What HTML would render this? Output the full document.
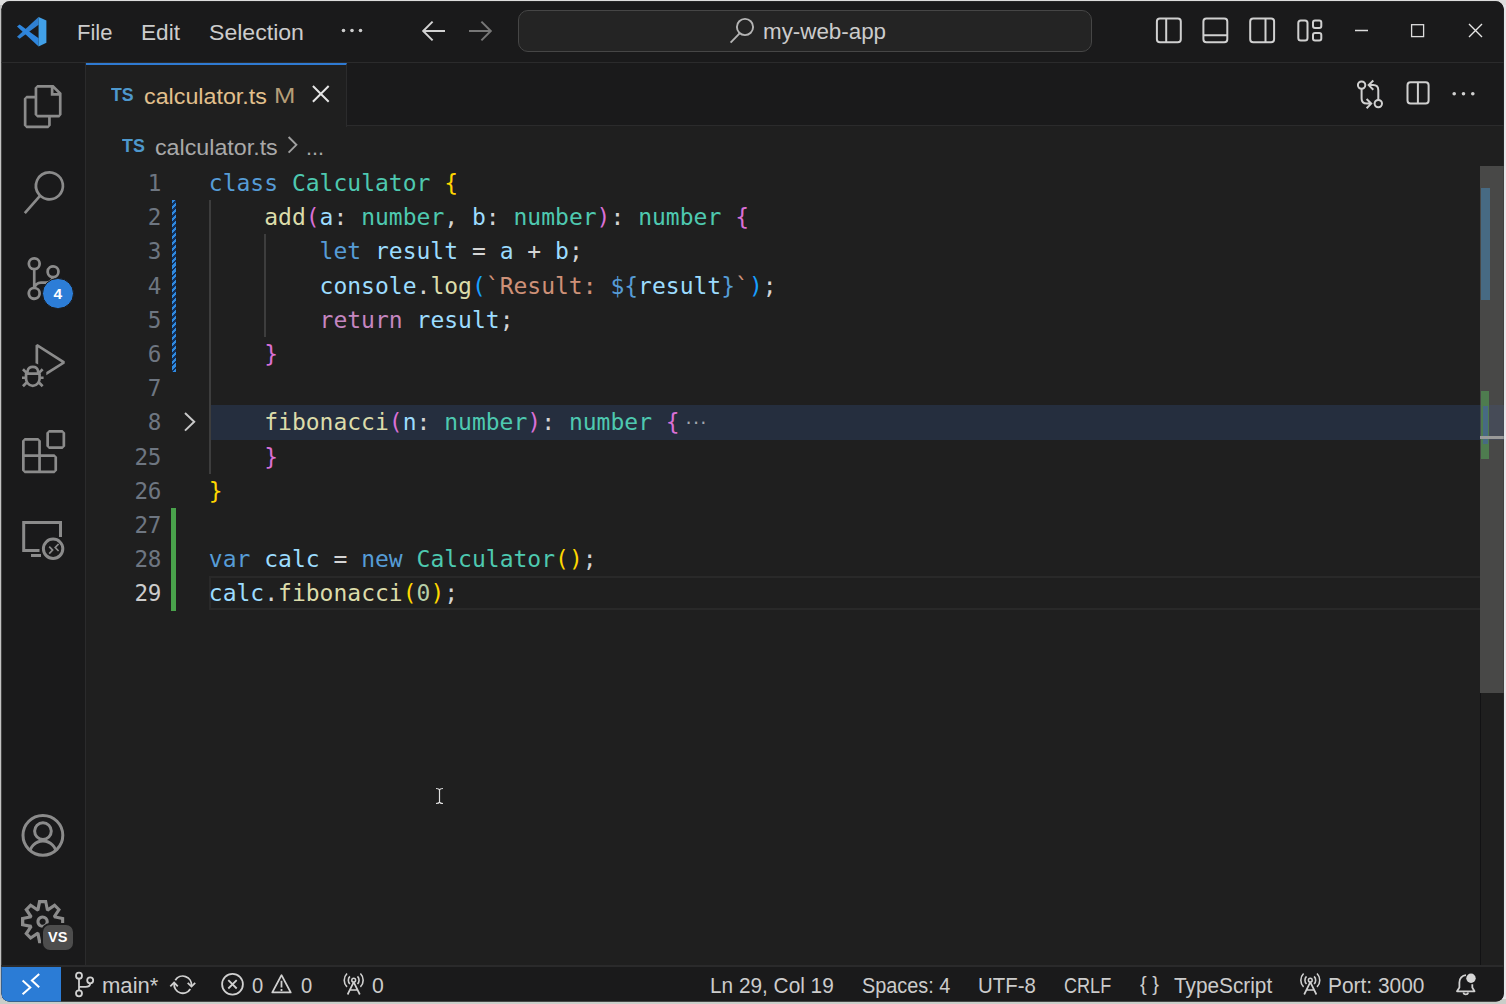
<!DOCTYPE html>
<html lang="en">
<head>
<meta charset="utf-8">
<title>calculator.ts - my-web-app - Visual Studio Code</title>
<style>
*{box-sizing:border-box;margin:0;padding:0}
html,body{width:1506px;height:1004px;overflow:hidden;background:#c4c4c4}
body{position:relative;background:linear-gradient(#dddddd,#dddddd) top/100% 5px no-repeat,linear-gradient(#c9cec9,#c9cec9) bottom/100% 5px no-repeat,linear-gradient(#e6e6ea,#e6e6ea) right/5px 100% no-repeat,#c2c2c2;font-family:"Liberation Sans",sans-serif;color:#cccccc}
#win{position:absolute;left:0;top:0;width:1506px;height:1004px;background:#1a1a1b;clip-path:inset(1.3px 2.2px 2.4px 1.5px round 8px)}
.abs{position:absolute}
.ui{position:absolute;white-space:pre;line-height:1;transform-origin:0 50%}
svg{position:absolute;overflow:visible}
/* regions */
#titlebar{left:0;top:0;width:1506px;height:63px;background:#1a1a1b;border-bottom:1px solid #2b2b2c}
#activity{left:0;top:63px;width:86px;height:903px;background:#1a1a1b;border-right:1px solid #2b2b2c}
#tabs{left:86px;top:63px;width:1420px;height:62.5px;background:#1a1a1b;border-bottom:1.5px solid #2b2b2c}
#tab{left:86px;top:63px;width:261px;height:64px;background:#1f1f1f;border-right:1px solid #2b2b2c;border-top:2px solid #2f7ad2}
#editor{left:86px;top:125.5px;width:1420px;height:841px;background:#1f1f1f}
#status{left:0;top:965px;width:1506px;height:39px;background:#1a1a1b;border-top:2px solid #2a2a2b}
#remote{left:0;top:967px;width:61.4px;height:37px;background:#2b7cd6}
/* code */
.ln{position:absolute;left:100px;width:61px;text-align:right;height:34px;line-height:34px;font-family:"DejaVu Sans Mono","Liberation Mono",monospace;font-size:22.6px;color:#6e7681;letter-spacing:-0.3px}
.cl{position:absolute;left:208.8px;height:34px;line-height:34px;white-space:pre;font-family:"DejaVu Sans Mono","Liberation Mono",monospace;font-size:23px;color:#d4d4d4}
.k{color:#569cd6}.t{color:#4ec9b0}.f{color:#dcdcaa}.v{color:#9cdcfe}.s{color:#ce9178}.c{color:#c586c0}.n{color:#b5cea8}
.b1{color:#ffd700}.b2{color:#da70d6}.b3{color:#179fff}
</style>
</head>
<body>
<div id="win">
<div id="titlebar" class="abs"></div>
<div id="activity" class="abs"></div>
<div id="tabs" class="abs"></div>
<div id="editor" class="abs"></div>
<div id="tab" class="abs"></div>
<div id="status" class="abs"></div>
<div id="remote" class="abs"></div>

<!-- TITLEBAR -->
<div id="tb-items">
<span class="ui" id="m-file" style="left:76.9px;top:22.14px;font-size:22.4px;transform:scaleX(0.9844)">File</span>
<span class="ui" id="m-edit" style="left:141.4px;top:22.14px;font-size:22.4px;transform:scaleX(1.0087)">Edit</span>
<span class="ui" id="m-sel" style="left:209.2px;top:22.14px;font-size:22.4px;transform:scaleX(1.0308)">Selection</span>
<div class="abs" id="cmd" style="left:518px;top:10px;width:574px;height:42px;border:1px solid #464646;border-radius:10px;background:#242424"></div>
<span class="ui" id="cmd-t" style="left:762.6px;top:20.84px;font-size:22.4px;transform:scaleX(0.9989)">my-web-app</span>
</div>

<!-- TAB -->
<span class="ui" id="tab-ts" style="left:110.8px;top:85.76px;font-size:18px;font-weight:bold;color:#4e98cd;transform:scaleX(0.9842)">TS</span>
<span class="ui" id="tab-name" style="left:144.2px;top:85.74px;font-size:22.4px;color:#e2c08d;transform:scaleX(1.0394)">calculator.ts</span>
<span class="ui" id="tab-m" style="left:274.4px;top:85.4px;font-size:22px;color:#b59e78;transform:scaleX(1.1665)">M</span>

<!-- BREADCRUMB -->
<span class="ui" id="bc-ts" style="left:122.2px;top:136.66px;font-size:18px;font-weight:bold;color:#4e98cd;transform:scaleX(0.9926)">TS</span>
<span class="ui" id="bc-name" style="left:155.1px;top:136.84px;font-size:22.4px;color:#a9a9a9;transform:scaleX(1.0382)">calculator.ts</span>
<span class="ui" id="bc-dots" style="left:306.4px;top:136.84px;font-size:22.4px;color:#a9a9a9;transform:scaleX(0.9643)">...</span>

<!-- EDITOR DECORATIONS -->
<div id="deco">
<div class="abs" id="hl8" style="left:209px;top:404.6px;width:1271px;height:35.3px;background:#252e3e"></div>
<div class="abs" id="cur" style="left:209px;top:576px;width:1274px;height:34.4px;border:2px solid #292929"></div>
<div class="abs" id="ig1" style="left:209px;top:200px;width:2px;height:274px;background:#3d3d3d"></div>
<div class="abs" id="ig2" style="left:264px;top:234px;width:2px;height:103px;background:#3d3d3d"></div>
<div class="abs" id="dd-mod" style="left:171.5px;top:200px;width:4.6px;height:171.6px;background:repeating-linear-gradient(-45deg,#2f8ae0 0 2.2px,#11305c 2.2px 4.2px)"></div>
<div class="abs" id="dd-add" style="left:171.3px;top:507.8px;width:4.8px;height:103.3px;background:#49a24b"></div>
</div>

<!-- LINE NUMBERS -->
<div id="lns">
<div class="ln" style="top:166px">1</div>
<div class="ln" style="top:200px">2</div>
<div class="ln" style="top:234px">3</div>
<div class="ln" style="top:269px">4</div>
<div class="ln" style="top:303px">5</div>
<div class="ln" style="top:337px">6</div>
<div class="ln" style="top:371px">7</div>
<div class="ln" style="top:405px">8</div>
<div class="ln" style="top:440px">25</div>
<div class="ln" style="top:474px">26</div>
<div class="ln" style="top:508px">27</div>
<div class="ln" style="top:542px">28</div>
<div class="ln" style="top:576px;color:#cccccc">29</div>
</div>

<!-- CODE -->
<div id="code">
<div class="cl" style="top:166px"><span class="k">class</span> <span class="t">Calculator</span> <span class="b1">{</span></div>
<div class="cl" style="top:200px">    <span class="f">add</span><span class="b2">(</span><span class="v">a</span>: <span class="t">number</span>, <span class="v">b</span>: <span class="t">number</span><span class="b2">)</span>: <span class="t">number</span> <span class="b2">{</span></div>
<div class="cl" style="top:234px">        <span class="k">let</span> <span class="v">result</span> = <span class="v">a</span> + <span class="v">b</span>;</div>
<div class="cl" style="top:269px">        <span class="v">console</span>.<span class="f">log</span><span class="b3">(</span><span class="s">`Result: </span><span class="k">${</span><span class="v">result</span><span class="k">}</span><span class="s">`</span><span class="b3">)</span>;</div>
<div class="cl" style="top:303px">        <span class="c">return</span> <span class="v">result</span>;</div>
<div class="cl" style="top:337px">    <span class="b2">}</span></div>
<div class="cl" style="top:405px">    <span class="f">fibonacci</span><span class="b2">(</span><span class="v">n</span>: <span class="t">number</span><span class="b2">)</span>: <span class="t">number</span> <span class="b2">{</span><span style="color:#a2a6ad;font-size:16px;letter-spacing:-2.2px;position:relative;left:4px;top:-2px">···</span></div>
<div class="cl" style="top:440px">    <span class="b2">}</span></div>
<div class="cl" style="top:474px"><span class="b1">}</span></div>
<div class="cl" style="top:542px"><span class="k">var</span> <span class="v">calc</span> = <span class="k">new</span> <span class="t">Calculator</span><span class="b1">()</span>;</div>
<div class="cl" style="top:576px"><span class="v">calc</span>.<span class="f">fibonacci</span><span class="b1">(</span><span class="n">0</span><span class="b1">)</span>;</div>
</div>

<!-- SCROLLBAR -->
<div id="sb">
<div class="abs" style="left:1480px;top:693px;width:1px;height:272px;background:#121214"></div>
<div class="abs" style="left:1480px;top:166px;width:26px;height:527px;background:#484847"></div>
<div class="abs" style="left:1480px;top:405px;width:26px;height:35px;background:#464b57"></div>
<div class="abs" style="left:1481px;top:188px;width:9px;height:112px;background:#476a83"></div>
<div class="abs" style="left:1481px;top:391px;width:8px;height:68px;background:#4e7c4f"></div>
<div class="abs" style="left:1483px;top:406px;width:5px;height:38px;background:#476a83"></div>
<div class="abs" style="left:1480px;top:436px;width:26px;height:3px;background:#9a9a9a"></div>
</div>

<!-- STATUS BAR -->
<div id="st-items">
<span class="ui" id="s-main" style="left:102.3px;top:975.04px;font-size:22.4px;transform:scaleX(0.9850)">main*</span>
<span class="ui" id="s-e0" style="left:251.7px;top:975.04px;font-size:22.4px;transform:scaleX(0.9014)">0</span>
<span class="ui" id="s-w0" style="left:300.7px;top:975.04px;font-size:22.4px;transform:scaleX(0.9014)">0</span>
<span class="ui" id="s-p0" style="left:372.0px;top:975.04px;font-size:22.4px;transform:scaleX(0.9472)">0</span>
<span class="ui" id="s-ln" style="left:710.0px;top:975.04px;font-size:22.4px;transform:scaleX(0.9290)">Ln 29, Col 19</span>
<span class="ui" id="s-sp" style="left:861.5px;top:975.04px;font-size:22.4px;transform:scaleX(0.8875)">Spaces: 4</span>
<span class="ui" id="s-utf" style="left:978.2px;top:975.04px;font-size:22.4px;transform:scaleX(0.9115)">UTF-8</span>
<span class="ui" id="s-crlf" style="left:1063.9px;top:975.04px;font-size:22.4px;transform:scaleX(0.8076)">CRLF</span>
<span class="ui" id="s-br" style="left:1140.3px;top:973.5px;font-size:20.5px;transform:scaleX(0.9743)">{ }</span>
<span class="ui" id="s-ts" style="left:1173.9px;top:975.04px;font-size:22.4px;transform:scaleX(0.9284)">TypeScript</span>
<span class="ui" id="s-port" style="left:1327.8px;top:975.04px;font-size:22.4px;transform:scaleX(0.9328)">Port: 3000</span>
</div>

<!-- ICONS -->
<div id="icons">
<!-- VS Code logo -->
<svg id="logo" style="left:16.7px;top:16.7px" width="29.4" height="29.4" viewBox="0 0 29.4 29.4">
<polygon points="21.6,0 21.6,7.8 2.6,21.8 0,19.8" fill="#2f80d2"/>
<polygon points="0,9.6 2.6,7.5 21.6,21.3 21.6,29.4" fill="#2e86de"/>
<polygon points="21.6,0 29.4,3.4 29.4,25.8 21.6,29.4" fill="#41a0e8"/>
</svg>
<!-- nav arrows -->
<svg style="left:0;top:0" width="1506" height="62" viewBox="0 0 1506 62" fill="none" stroke-linecap="butt" stroke-linejoin="miter">
<path d="M445 31H423.5M432.6 21.6L423.2 31L432.6 40.4" stroke="#d2d2d2" stroke-width="2"/>
<path d="M469 31H490.5M481.4 21.6L490.8 31L481.4 40.4" stroke="#777777" stroke-width="2"/>
<!-- search in command center -->
<circle cx="745" cy="27" r="8.1" stroke="#b4b4b4" stroke-width="1.9"/>
<path d="M739.6 33.4L730.6 42.6" stroke="#b4b4b4" stroke-width="1.9"/>
<!-- layout icons -->
<g stroke="#d0d0d0" stroke-width="2">
<rect x="1156.9" y="18.6" width="23.9" height="23.6" rx="3"/><path d="M1166.2 18.6V42.2"/>
<rect x="1203.4" y="18.6" width="23.9" height="23.6" rx="3"/><path d="M1203.4 35.3H1227.3"/>
<rect x="1250.2" y="18.6" width="23.9" height="23.6" rx="3"/><path d="M1265.5 18.6V42.2"/>
<rect x="1298.3" y="20.5" width="9.2" height="20" rx="2.5"/>
<rect x="1313" y="20.5" width="8.3" height="7.5" rx="2"/>
<rect x="1313" y="33.1" width="8.3" height="7.5" rx="2"/>
</g>
<!-- window controls -->
<path d="M1355 30.5H1368" stroke="#dddddd" stroke-width="1.3"/>
<rect x="1411.6" y="24.7" width="12" height="11.9" stroke="#dddddd" stroke-width="1.3"/>
<path d="M1469 24.1L1482 37.1M1482 24.1L1469 37.1" stroke="#e6e6e6" stroke-width="1.4"/>
<!-- menu dots -->
<g fill="#cccccc" stroke="none"><circle cx="343.5" cy="30.5" r="1.8"/><circle cx="352" cy="30.5" r="1.8"/><circle cx="360.5" cy="30.5" r="1.8"/></g>
</svg>
<!-- tab close, breadcrumb chevron, editor actions, fold chevron -->
<svg style="left:0;top:62px" width="1506" height="400" viewBox="0 62 1506 400" fill="none">
<path d="M312.9 86L328.7 101.8M328.7 86L312.9 101.8" stroke="#e4e4e4" stroke-width="2"/>
<path d="M288.6 137L296.4 144.8L288.6 152.6" stroke="#a0a0a0" stroke-width="1.9"/>
<path d="M185 413L194.2 421.8L185 430.6" stroke="#c8c8c8" stroke-width="2"/>
<g stroke="#d0d0d0" stroke-width="2">
<circle cx="1361.6" cy="85.1" r="3.7"/><circle cx="1378.3" cy="103.6" r="3.7"/>
<path d="M1361.6 88.8V98.5Q1361.600 103.6 1366.7 103.6H1370.5M1366.6 99L1371.2 103.6L1366.6 108.2"/>
<path d="M1378.3 99.9V90.2Q1378.3 85.1 1373.2 85.1H1369.4M1373.3 80.5L1368.7 85.1L1373.3 89.7"/>
<rect x="1407.5" y="82.3" width="21.1" height="21.1" rx="3"/><path d="M1417.9 82.3V103.4"/>
</g>
<g fill="#d0d0d0"><circle cx="1454.2" cy="93.7" r="1.8"/><circle cx="1463.5" cy="93.7" r="1.8"/><circle cx="1472.8" cy="93.7" r="1.8"/></g>
</svg>
<!-- activity bar icons (24-grid, 43.2px) -->
<svg class="act" style="left:21.5px;top:84.5px" width="43.2" height="43.2" viewBox="0 0 24 24" fill="#8b8b8b"><path d="M17.5 0h-9L7 1.5V6H2.500L1 7.5v15.070L2.500 24h12.070L16 22.570V18h4.700l1.300-1.430V4.500L17.500 0zm0 2.120l2.380 2.380H17.500V2.120zm-3 20.380h-12v-15H7v9.070L8.500 18h6v4.500zm6-6h-12v-15H16V6h4.500v10.500z"/></svg>
<svg class="act" style="left:21.5px;top:170.900px" width="43.2" height="43.2" viewBox="0 0 24 24" fill="#8b8b8b"><path d="M15.250 0a8.250 8.250 0 0 0-6.180 13.720L1 22.880l1.120 1 8.050-9.120A8.251 8.251 0 1 0 15.250.010V0zm0 15a6.750 6.750 0 1 1 0-13.500 6.750 6.750 0 0 1 0 13.500z"/></svg>
<svg class="act" style="left:21.5px;top:257.300px" width="43.2" height="43.2" viewBox="0 0 24 24" fill="#8b8b8b"><path d="M21.007 8.222A3.738 3.738 0 0 0 15.045 5.200a3.737 3.737 0 0 0 1.156 6.583 2.988 2.988 0 0 1-2.668 1.670h-2.990a4.456 4.456 0 0 0-2.989 1.165V7.400a3.737 3.737 0 1 0-1.494 0v9.117a3.776 3.776 0 1 0 1.816.099 2.990 2.990 0 0 1 2.668-1.667h2.990a4.484 4.484 0 0 0 4.223-3.039 3.736 3.736 0 0 0 3.250-3.687zM4.565 3.738a2.242 2.242 0 1 1 4.484 0 2.242 2.242 0 0 1-4.484 0zm4.484 16.441a2.242 2.242 0 1 1-4.484 0 2.242 2.242 0 0 1 4.484 0zm8.221-9.715a2.242 2.242 0 1 1 0-4.485 2.242 2.242 0 0 1 0 4.485z"/></svg>
<svg class="act" style="left:21.5px;top:343.700px" width="43.2" height="43.2" viewBox="0 0 24 24" fill="#8b8b8b"><path d="M10.940 13.500l-1.320 1.320a3.730 3.730 0 0 0-7.240 0L1.060 13.500 0 14.560l1.720 1.720-.220.220V18H0v1.500h1.500v.080c.077.489.214.966.410 1.420L0 22.940 1.060 24l1.650-1.650A4.308 4.308 0 0 0 6 24a4.310 4.310 0 0 0 3.290-1.650L10.940 24 12 22.940 10.090 21c.198-.464.336-.951.410-1.450v-.100H12V18h-1.500v-1.500l-.220-.220L12 14.560l-1.060-1.060zM6 13.500a2.250 2.250 0 0 1 2.250 2.250h-4.500A2.250 2.250 0 0 1 6 13.500zm3 6a3.330 3.330 0 0 1-3 3 3.330 3.330 0 0 1-3-3v-2.250h6v2.250zm14.760-9.900v1.260L13.500 17.370V15.600l8.500-5.370L9 2v9.460a5.070 5.070 0 0 0-1.500-.720V.630L8.640 0l15.120 9.600z"/></svg>
<svg class="act" style="left:21.5px;top:430.100px" width="43.2" height="43.2" viewBox="0 0 24 24" fill="#8b8b8b"><path d="M13.500 1.500L15 0h7.500L24 1.500V9l-1.500 1.500H15L13.500 9V1.500zm1.500 0V9h7.500V1.500H15zM0 15V6l1.500-1.500H9L10.500 6v7.500H18l1.500 1.500v7.500L18 24H1.500L0 22.500V15zm9-1.500V6H1.500v7.500H9zM9 15H1.500v7.500H9V15zm1.500 7.500H18V15h-7.500v7.500z"/></svg>
<!-- remote explorer -->
<svg style="left:0;top:505px" width="87" height="70" viewBox="0 505 87 70" fill="none" stroke="#8b8b8b" stroke-width="3">
<path d="M60.500 537V522.400H23.700V550.400H39.500M31 555.600H41"/>
<circle cx="53.100" cy="548.800" r="9.700"/>
<path d="M49.200 546.600L52.600 550.100L49.200 553.600M58.600 544L55.200 547.500L58.600 551" stroke-width="1.700"/>
</svg>
<!-- account -->
<svg style="left:0;top:800px" width="87" height="70" viewBox="0 800 87 70" fill="none" stroke="#8b8b8b" stroke-width="3">
<defs><clipPath id="acc"><circle cx="42.900" cy="835.300" r="20"/></clipPath></defs>
<circle cx="42.900" cy="835.300" r="19.900"/>
<circle cx="42.950" cy="831.100" r="8.350"/>
<circle cx="42.950" cy="854.500" r="13.500" clip-path="url(#acc)"/>
</svg>
<!-- gear -->
<svg class="act" style="left:21.300px;top:899.800px" width="43.2" height="43.2" viewBox="0 0 24 24" fill="#8b8b8b"><path fill-rule="evenodd" d="M19.850 8.750l4.150.830v4.840l-4.150.830 2.350 3.520-3.430 3.430-3.520-2.350-.830 4.150H9.580l-.830-4.150-3.520 2.350-3.430-3.430 2.350-3.520L0 14.420V9.580l4.150-.830L1.800 5.230 5.230 1.800l3.520 2.350L9.580 0h4.840l.830 4.150 3.520-2.350 3.430 3.430-2.350 3.520zm-1.570 5.070l4-.810v-2l-4-.810-.540-1.300 2.290-3.430-1.430-1.430-3.430 2.290-1.300-.540-.810-4h-2l-.810 4-1.300.540-3.430-2.290-1.430 1.430L6.380 8.900l-.540 1.300-4 .810v2l4 .810.540 1.300-2.290 3.430 1.430 1.430 3.430-2.290 1.300.540.810 4h2l.810-4 1.300-.540 3.430 2.290 1.430-1.430-2.290-3.430.540-1.300zm-8.186-4.672A3.430 3.430 0 0 1 12 8.570 3.440 3.440 0 0 1 15.430 12a3.430 3.430 0 1 1-5.336-2.852zm.956 4.274c.281.188.612.288.950.288A1.700 1.700 0 0 0 13.710 12a1.710 1.710 0 1 0-2.660 1.422z"/></svg>
<!-- badges -->
<div class="abs" id="scm-badge" style="left:42.400px;top:278px;width:31.200px;height:31.200px;border-radius:50%;background:#2c7dd7;border:1.500px solid #1a1a1b"></div>
<span class="ui" id="scm-n" style="left:53.400px;top:285.900px;font-size:15.500px;font-weight:bold;color:#ffffff">4</span>
<div class="abs" id="vs-badge" style="left:41.100px;top:923.100px;width:34px;height:29px;border-radius:9px;background:#4d4d4d;border:2px solid #1a1a1b"></div>
<span class="ui" id="vs-t" style="left:48px;top:930.300px;font-size:14.500px;font-weight:bold;color:#ffffff">VS</span>
<!-- status bar icons -->
<svg style="left:0;top:962px" width="1506" height="42" viewBox="0 962 1506 42" fill="none" stroke="#d0d0d0" stroke-width="1.800">
<path d="M22.600 980.600L30.300 987.400L22.600 994.300M39.200 973.900L31.900 980.600L39.200 987.300" stroke="#ffffff" stroke-width="2"/>
<circle cx="79" cy="975.700" r="3"/><circle cx="79" cy="993.300" r="3"/><circle cx="90.200" cy="980.300" r="3"/>
<path d="M79 978.700V990.300M90.200 983.300Q90.200 986.900 85.500 986.900H79"/>
<!-- sync -->
<path d="M175.300 980.300A8.700 8.700 0 0 1 191.400 985.800M190.300 989A8.700 8.700 0 0 1 174.200 983.400"/>
<path d="M187.700 982.900L191.500 986.600L195.200 982.900M170.300 986.300L174.100 982.600L177.800 986.300" stroke-width="1.800"/>
<!-- error -->
<circle cx="232.500" cy="984.300" r="10.400"/><path d="M228.300 980.100L236.700 988.500M236.700 980.100L228.300 988.500"/>
<!-- warning -->
<path d="M281.500 975.200L272.300 992.400H290.700Z" stroke-linejoin="round"/><path d="M281.500 980.800V987.400M281.500 988.900V990.900"/>
<!-- radio tower 1 -->
<g id="tower">
<circle cx="353.700" cy="980.200" r="1.900" stroke-width="1.500"/>
<path d="M353.700 982.200L347.600 994.500M353.700 982.200L359.800 994.500M349.800 990H357.600" stroke-width="1.700"/>
<path d="M349.900 976.400A5.400 5.400 0 0 0 349.900 984M357.500 976.400A5.400 5.400 0 0 1 357.500 984" stroke-width="1.600"/>
<path d="M347 973.500A9.500 9.500 0 0 0 347 986.900M360.400 973.500A9.500 9.500 0 0 1 360.400 986.900" stroke-width="1.600"/>
</g>
<use href="#tower" x="956.600" y="0"/>
<!-- bell -->
<path d="M1466 975.200A7 7 0 0 0 1459.400 982.400V987.500L1457 991.300H1474.500L1472.300 987.500V984.200" stroke-linejoin="round"/>
<path d="M1463.300 992.500A2.600 2.600 0 0 0 1468.300 992.500" />
<circle cx="1471" cy="978.300" r="4.700" fill="#d6d6d6" stroke="none"/>
</svg>
<!-- mouse I-beam -->
<svg style="left:432px;top:786px" width="16" height="22" viewBox="432 786 16 22" fill="none" stroke="#e0e0e0" stroke-width="1.200">
<path d="M439.500 789V803M436 788.500Q439 788.500 439.500 790Q440 788.500 443 788.500M436 803.500Q439 803.500 439.500 802Q440 803.500 443 803.500"/>
</svg>
</div>
</div>
</body>
</html>
